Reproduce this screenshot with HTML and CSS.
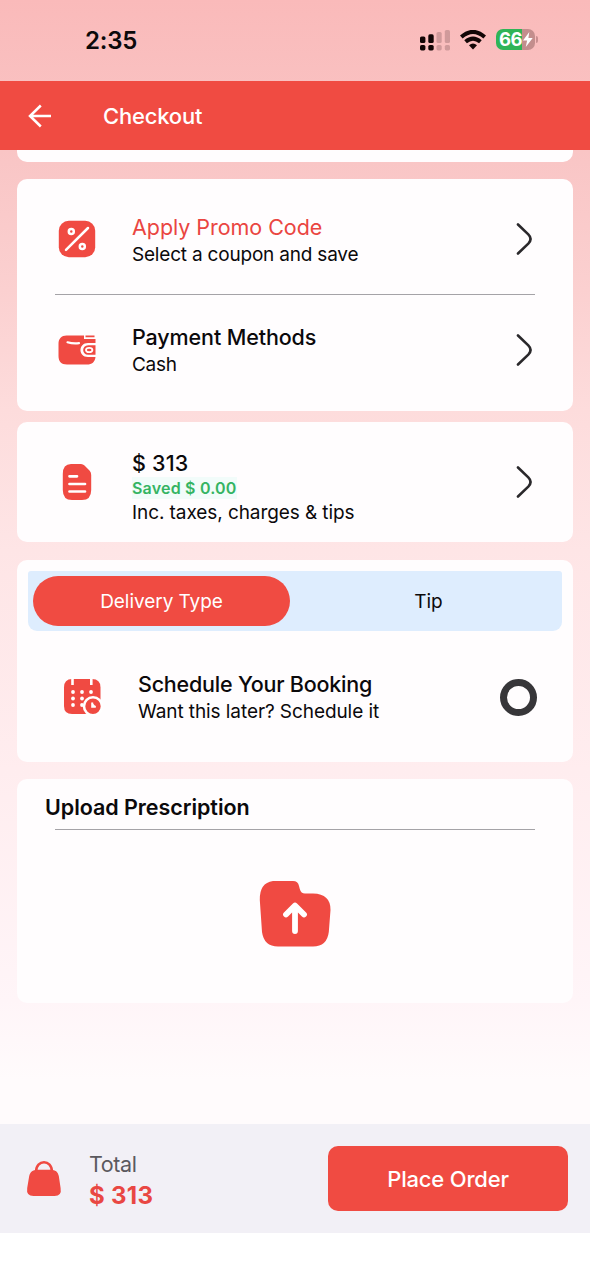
FILE: index.html
```html
<!DOCTYPE html>
<html lang="en">
<head>
<meta charset="utf-8">
<title>Checkout</title>
<link rel="stylesheet" href="styles.css">
</head>
<body>
<div class="screen">
  <div class="status">
    <span class="clock">2:35</span>
    <div class="indicators">
      <svg class="signal" width="31" height="21" viewBox="0 0 31 21">
        <g fill="#120606"><rect x="0" y="6.5" width="5.4" height="6.5" rx="1.6"/><rect x="8.3" y="4.3" width="5.4" height="8.7" rx="1.6"/><rect x="0" y="15" width="5.4" height="5.4" rx="1.6"/><rect x="8.3" y="15" width="5.4" height="5.4" rx="1.6"/></g>
        <g fill="#d09a9b"><rect x="16.5" y="2" width="5.2" height="11" rx="1.6"/><rect x="24.8" y="0" width="5.2" height="13" rx="1.6"/><rect x="16.5" y="15" width="5.2" height="5.4" rx="1.6"/><rect x="24.8" y="15" width="5.2" height="5.4" rx="1.6"/></g>
      </svg>
      <svg class="wifi" width="26" height="20" viewBox="0 0 26 20">
        <g fill="none" stroke="#120606" stroke-width="4"><path d="M1.3 7Q13-3.2 24.7 7"/><path d="M5.6 11.8Q13 5.4 20.4 11.8"/></g>
        <path d="M9 15.2Q13 11.7 17 15.2L13 19.5Z" fill="#120606"/>
      </svg>
      <div class="battery">
        <span class="level">66</span>
        <svg width="10" height="15" viewBox="0 0 10 15"><path d="M6.3 0L0 8.5H4.1L2.8 15L9.7 6H5.4Z" fill="#fff"/></svg>
      </div>
      <span class="battery-cap"></span>
    </div>
  </div>

  <header class="appbar">
    <svg width="24" height="24" viewBox="0 0 24 24" fill="none" stroke="#fff" stroke-width="2.5"><path d="M23 12H2M12.8 1.5L2 12L12.8 22.5"/></svg>
    <h1 class="appbar-title">Checkout</h1>
  </header>

  <main class="content">
    <section class="card card-tail"></section>

    <section class="card card-options">
      <div class="row row-promo">
        <svg class="icon" width="38" height="38" viewBox="0 0 38 38">
          <rect x=".8" y=".8" width="36.4" height="36.4" rx="10" fill="#f04a42"/>
          <g fill="none" stroke="#fff" stroke-width="2.5"><path d="M8 29.8L30 8" stroke-linecap="round"/><circle cx="13.3" cy="11.6" r="2.5"/><circle cx="24.3" cy="26.4" r="2.5"/></g>
        </svg>
        <div class="copy"><div class="title accent">Apply Promo Code</div><div class="sub s-promo">Select a coupon and save</div></div>
        <svg class="chevron" width="18" height="34" viewBox="0 0 18 34"><path d="M2 2.5L12.3 12.4Q16.8 17 12.3 21.6L2 31.5"/></svg>
      </div>
      <div class="divider"></div>
      <div class="row row-payment">
        <svg class="icon" width="38" height="30" viewBox="0 0 38 30">
          <path d="M8.5.5H26V4H37.5V8H30C20 8 20 22 30 22H37.5C37 27 34 29.5 29 29.5H9C3 29.5.5 26 .5 21V9C.5 3.5 3.5.5 8.5.5Z" fill="#f04a42"/>
          <path d="M27.5.5H36.5V2.3H27.5ZM37.5 10.2H30.3C23.5 10.2 23.5 19.8 30.3 19.8H37.5Z" fill="#f04a42"/>
          <path d="M9.5 7.3Q15 9 21 8.2" fill="none" stroke="#fff" stroke-width="2.2" stroke-linecap="round"/>
          <ellipse cx="31.2" cy="15" rx="3.2" ry="2.2" fill="#f04a42" stroke="#fff" stroke-width="1.8"/>
        </svg>
        <div class="copy"><div class="title t-payment">Payment Methods</div><div class="sub s-cash">Cash</div></div>
        <svg class="chevron" width="18" height="34" viewBox="0 0 18 34"><path d="M2 2.5L12.3 12.4Q16.8 17 12.3 21.6L2 31.5"/></svg>
      </div>
    </section>

    <section class="card card-amount">
      <div class="row row-amount">
        <svg class="icon" width="38" height="38" viewBox="0 0 38 38">
          <path d="M13 1H23Q25 1 26.5 2.5L31.5 7.5Q33.2 9.2 33.2 12V27Q33.2 37 24 37H14Q4.8 37 4.8 27V11Q4.8 1 13 1Z" fill="#f04a42"/>
          <path d="M11.5 13.3H19M11.5 21H27M11.5 28.5H27" stroke="#fff" stroke-width="2.7" stroke-linecap="round"/>
        </svg>
        <div class="copy"><div class="title t-amount">$ 313</div><div class="saved">Saved $ 0.00</div><div class="sub s-taxes">Inc. taxes, charges &amp; tips</div></div>
        <svg class="chevron" width="18" height="34" viewBox="0 0 18 34"><path d="M2 2.5L12.3 12.4Q16.8 17 12.3 21.6L2 31.5"/></svg>
      </div>
    </section>

    <section class="card card-delivery">
      <div class="tabs"><div class="tab tab-active">Delivery Type</div><div class="tab tab-tip">Tip</div></div>
      <div class="row row-schedule">
        <svg class="icon" width="40" height="40" viewBox="0 0 40 40">
          <path d="M9 2H29Q37.5 2 37.5 10.5V29Q37.5 37 29 37H9Q1 37 1 29V10.5Q1 2 9 2Z" fill="#f04a42"/>
          <path d="M9.5 0V8M28.3 0V8" stroke="#fff" stroke-width="2.6"/>
          <g fill="#fff"><circle cx="10" cy="15" r="1.9"/><circle cx="19" cy="15" r="1.9"/><circle cx="28" cy="15" r="1.9"/><circle cx="10" cy="21.5" r="1.9"/><circle cx="19" cy="21.5" r="1.9"/><circle cx="10" cy="28" r="1.9"/><circle cx="19" cy="28" r="1.9"/></g>
          <circle cx="30" cy="29.2" r="9" fill="#f04a42" stroke="#fff" stroke-width="2.6"/>
          <path d="M29.2 25.5V29.8H32.8" fill="#fff" stroke="#fff" stroke-width="2"/>
        </svg>
        <div class="copy"><div class="title t-schedule">Schedule Your Booking</div><div class="sub s-schedule">Want this later? Schedule it</div></div>
        <span class="radio"></span>
      </div>
    </section>

    <section class="card card-upload">
      <h2 class="upload-title">Upload Prescription</h2>
      <div class="divider"></div>
      <svg class="upload-icon" width="72" height="68" viewBox="0 0 72 68">
        <path d="M14 1H34Q39 1 40 6L40.8 9Q42 13.5 46 13.5H54Q71.8 14 71.5 30L69.8 52Q68 66.5 54 66.5H19Q5 66.5 3 52L.8 20Q.3 3 14 1Z" fill="#f04a42"/>
        <path d="M36 51V26M27 34.5L36 25.5L45 34.5" fill="none" stroke="#fff" stroke-width="5.8" stroke-linecap="round" stroke-linejoin="round"/>
      </svg>
    </section>
  </main>

  <footer class="bottom">
    <svg width="36" height="36" viewBox="0 0 36 36"><path d="M7.5 9.5Q9 8.8 11 8.8H25Q31.5 8.8 32.8 15L34.6 27Q36 35 28.5 35H7.5Q0 35 1.2 27L3.2 15Q4.2 10.6 7.5 9.5Z" fill="#f04a42"/><path d="M10 11C10-2 26-2 26 11" fill="none" stroke="#f04a42" stroke-width="2.5"/></svg>
    <div class="total"><div class="total-label">Total</div><div class="total-value">$ 313</div></div>
    <button class="order">Place Order</button>
  </footer>
</div>
</body>
</html>
```
FILE: styles.css
```css
* { box-sizing: border-box; }
body { margin: 0; font-family: Inter, "Liberation Sans", sans-serif; color: #0b090b; }
h1, h2 { margin: 0; }
svg { display: block; flex: none; }
.screen {
  width: 590px; height: 1280px; display: flex; flex-direction: column; overflow: hidden; white-space: nowrap;
  background: linear-gradient(180deg, #fababa 0, #f9c5c5 150px, #fbd0d0 290px, #fddcdc 410px, #fee5e6 550px, #ffedef 770px, #fff5f8 1000px, #fffbfc 1080px, #fffbfc 1233px, #fff 1233px);
}
.status { height: 81px; display: flex; justify-content: space-between; padding: 0 52px 0 85px; }
.clock { padding-top: 26px; font-size: 24px; line-height: 30px; font-weight: 600; letter-spacing: -.2px; }
.indicators { display: flex; align-items: flex-start; padding-top: 29px; }
.signal { margin-top: 1px; }
.wifi { margin: 1px 0 0 9px; }
.battery {
  width: 39px; height: 21px; margin-left: 10px; border-radius: 7px; display: flex; align-items: center; padding-left: 3px;
  background: linear-gradient(90deg, #2fb457 67%, #c38e8d 67%);
}
.level { width: 24px; color: #fff; font-size: 18.5px; line-height: 21px; font-weight: 700; letter-spacing: -.4px; }
.battery-cap { width: 2px; height: 7px; margin: 7px 0 0 1px; background: #c98f90; border-radius: 0 3px 3px 0; }
.appbar { height: 69px; padding-left: 28px; display: flex; align-items: center; gap: 51px; background: #f04b42; color: #fff; }
.appbar-title { font-size: 22px; font-weight: 500; line-height: 30px; letter-spacing: -.2px; }
.content { height: 974px; padding: 0 17px; }
.card { background: #fffdfe; border-radius: 10px; }
.card-tail { height: 12px; border-radius: 0 0 10px 10px; margin-bottom: 17px; }
.card-options { height: 231.5px; margin-bottom: 11px; }
.row { display: flex; align-items: center; padding-left: 41px; padding-right: 39px; }
.row-promo { height: 115px; padding-top: 5px; }
.row-promo .copy { padding-top: 3px; }
.row-payment { height: 115px; padding-bottom: 6px; }
.row-payment .copy { padding-top: 2px; }
.copy { flex: 1; margin-left: 36px; }
.title { font-size: 21.5px; line-height: 27px; font-weight: 500; }
.accent { color: #ea4541; font-weight: 400; letter-spacing: -.05px; }
.t-payment { letter-spacing: -.12px; }
.t-schedule { letter-spacing: -.22px; }
.t-amount { letter-spacing: .2px; }
.sub { font-size: 19px; line-height: 27px; }
.s-promo { letter-spacing: -.2px; }
.s-cash { letter-spacing: -.3px; }
.s-taxes { letter-spacing: -.08px; }
.s-schedule { letter-spacing: -.08px; }
.chevron { fill: none; stroke: #2a282b; stroke-width: 2.6; stroke-linecap: round; stroke-linejoin: round; }
.divider { height: 1px; margin: 0 38px; background: #a5a3a7; box-shadow: 0 0 .5px #a5a3a7; }
.card-amount { height: 120.5px; margin-bottom: 17.5px; }
.row-amount { height: 120.5px; }
.saved { width: max-content; color: #35b463; background: #f2fcfa; font-size: 16px; line-height: 22px; font-weight: 600; letter-spacing: .2px; }
.row-amount .copy { padding-top: 12px; }
.card-delivery { height: 202.5px; padding: 11px; margin-bottom: 17px; }
.tabs { height: 60px; display: flex; padding: 5px; background: #deedfe; border-radius: 3px 3px 9px 9px; }
.tab { flex: 1; display: flex; align-items: center; justify-content: center; font-size: 19px; font-weight: 400; padding-top: 1px; }
.tab-active { flex: none; width: 257px; background: #f04b42; color: #fff; border-radius: 25px; letter-spacing: -.05px; }
.tab-tip { padding-left: 10px; }
.row-schedule { height: 133px; padding: 0 25px 0 35px; }
.row-schedule .copy { margin-left: 35px; padding-top: 1px; }
.radio { width: 37px; height: 37px; border: 7.9px solid #373639; border-radius: 50%; }
.card-upload { height: 224px; }
.upload-title { padding: 13px 0 0 28px; height: 50px; font-size: 21.5px; line-height: 30px; font-weight: 600; letter-spacing: -.05px; }
.upload-icon { margin: 49.5px auto 0; }
.bottom { height: 109px; display: flex; align-items: center; padding: 0 22px 0 26px; background: #f2f0f6; }
.total { flex: 1; margin-left: 27px; padding-top: 3px; }
.total-label { font-size: 21.5px; line-height: 32px; color: #5b595e; letter-spacing: -.4px; }
.total-value { font-size: 24px; line-height: 32px; font-weight: 700; color: #e94743; letter-spacing: .3px; }
.order { width: 240px; height: 65px; border: 0; border-radius: 10px; background: #f04b42; color: #fff; font: 500 22px/30px Inter, sans-serif; letter-spacing: -.2px; }
```
